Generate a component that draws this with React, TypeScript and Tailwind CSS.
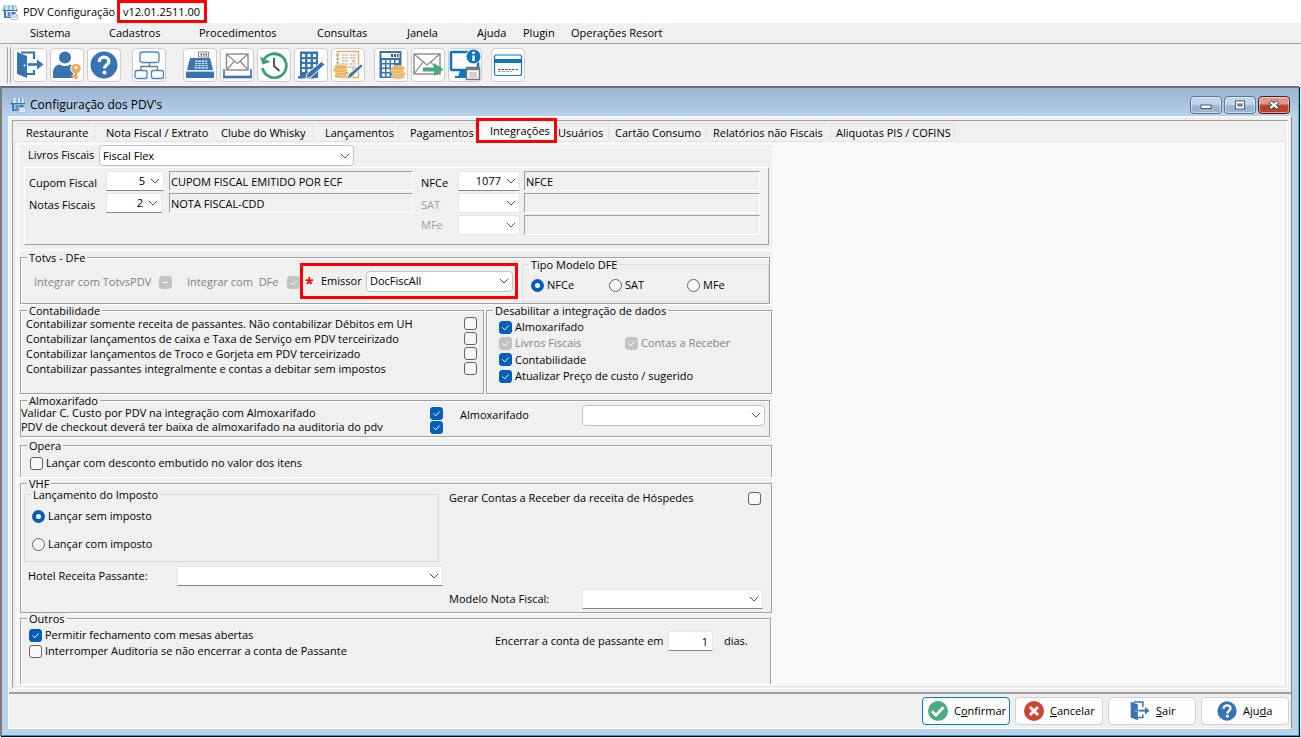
import type { ReactNode } from "react";
import clsx from "clsx";

const MENU = [
  { label: "Sistema", width: "w-[79px]" },
  { label: "Cadastros", width: "w-[90px]" },
  { label: "Procedimentos", width: "w-[118px]" },
  { label: "Consultas", width: "w-[90px]" },
  { label: "Janela", width: "w-[70px]" },
  { label: "Ajuda", width: "w-[46px]" },
  { label: "Plugin", width: "w-[48px]" },
  { label: "Operações Resort", width: "w-[110px]" },
];

const TABS = [
  { label: "Restaurante", className: "w-[80px] pl-[11px]" },
  { label: "Nota Fiscal / Extrato", className: "w-[119px] pl-[11px]" },
  { label: "Clube do Whisky", className: "w-[100px] pl-[7px]" },
  { label: "Lançamentos", className: "w-[85px] pl-[11px]" },
  { label: "Pagamentos", className: "w-[77px] pl-[11px]" },
  { label: "Integrações", className: "w-[81px]", active: true },
  { label: "Usuários", className: "w-[52px] pl-px" },
  { label: "Cartão Consumo", className: "w-[98px] pl-[6px]" },
  { label: "Relatórios não Fiscais", className: "w-[124px] pl-[6px]" },
  { label: "Aliquotas PIS / COFINS", className: "w-[124px] pl-[5px]" },
];

/* ---------- icons ---------- */

function StoreIcon() {
  return (
    <svg width="16" height="16" viewBox="0 0 16 16" aria-hidden="true">
      <path d="M2 1h12l1.500 5H.5z" fill="#8fb4d8" />
      <path d="M4 1h1.500v5H3zM8 1h1.500v5H8zM12 1h1l1 5h-2z" fill="#eaf2fa" />
      <path d="M.5 6h15v1.200H.5z" fill="#3a78b5" />
      <path d="M2 7h2v7H2zM2 12.500h8V14H2z" fill="#3a78b5" />
      <path d="M5.500 8h3v4h-3z" fill="#5b93c8" />
      <path d="M9.500 8h4v2.500h-4z" fill="#3a78b5" />
      <rect x="9" y="10.500" width="6.500" height="5" fill="#e8eef5" stroke="#9db8d2" strokeWidth=".7" />
      <path d="M9 11l3.200 2.500 3.200-2.500" fill="none" stroke="#9db8d2" strokeWidth=".8" />
    </svg>
  );
}

function ExitIcon({ className }: { className: string }) {
  return (
    <svg className={className} viewBox="0 0 28 28" aria-hidden="true">
      <path d="M1 1l10 4v22L1 23z" fill="#3873b3" />
      <path d="M5 1.500h13v6.500M18 19v4h-7" fill="none" stroke="#3873b3" strokeWidth="2.200" />
      <path d="M12 13.500h11" fill="none" stroke="#3873b3" strokeWidth="2.600" />
      <path d="M21 8.500l6.500 5-6.500 5z" fill="#3873b3" />
      <circle cx="8.500" cy="14.500" r="1" fill="#fff" />
    </svg>
  );
}

function HelpIcon({ className }: { className: string }) {
  return (
    <svg className={className} viewBox="0 0 28 28" aria-hidden="true">
      <circle cx="14" cy="14" r="13.500" fill="#3873b3" />
      <path d="M9.200 11c0-3 2-4.900 4.800-4.900s4.900 1.700 4.900 4.200c0 3.400-4.400 3.600-4.400 7.200" fill="none" stroke="#fff" strokeWidth="3.200" />
      <circle cx="14.500" cy="21.400" r="2" fill="#fff" />
    </svg>
  );
}

function UserKeyIcon() {
  return (
    <svg className="size-7" viewBox="0 0 28 28" aria-hidden="true">
      <circle cx="12" cy="6.500" r="6" fill="#3873b3" />
      <path d="M0 27v-5c0-5 3-8 7-8.500 3 2 7 2 10 0l3 1.500v12z" fill="#3873b3" />
      <circle cx="23" cy="17.500" r="5.300" fill="#e6ab55" stroke="#fdfdfd" />
      <path d="M21.500 20h3v8h-3zM18.500 24h4v2.500h-4z" fill="#e6ab55" />
      <circle cx="23" cy="16.500" r="1.500" fill="#fff" />
    </svg>
  );
}

function NetworkIcon() {
  return (
    <svg className="size-8" viewBox="0 0 32 32" fill="none" aria-hidden="true">
      <g stroke="#4f86c0" strokeWidth="1.300">
        <rect x="7" y="3" width="19" height="10.500" rx="2.500" />
        <rect x="2" y="21.500" width="12" height="8" rx="2" />
        <rect x="18.500" y="21.500" width="12" height="8" rx="2" />
      </g>
      <path d="M16.500 14v4M8 21v-3.500h16.500V21" stroke="#777" strokeWidth="1.300" />
    </svg>
  );
}

function RegisterIcon() {
  return (
    <svg className="size-7" viewBox="0 0 28 28" aria-hidden="true">
      <rect x="12.500" y="1" width="10" height="5" fill="#fff" stroke="#888" />
      <path d="M14.500 2.500h1.500v2h-1.500zM17 2.500h1.500v2H17zM19.500 2.500H21v2h-1.500z" fill="#555" />
      <path d="M4 7h20l3 12H1z" fill="#3873b3" />
      <rect y="20.500" width="28" height="6.500" rx=".5" fill="#3873b3" />
      <path d="M1 19.800h26" stroke="#dfe9f3" />
      <path d="M9.500 9.500h11.500l1 8h-13.500z" fill="#dce8f4" />
      <path d="M9 11.500h13M9 13.500h13M8.500 15.500h14M12 9.500l-.5 8M15.200 9.500v8M18.500 9.500l.5 8" stroke="#3873b3" strokeWidth=".9" />
    </svg>
  );
}

function MailTrayIcon() {
  return (
    <svg className="size-8" viewBox="0 0 32 32" fill="none" aria-hidden="true">
      <rect x="5.500" y="5" width="21.500" height="16" stroke="#888" strokeWidth="1.400" />
      <path d="M6 5.500l10.300 9 10.200-9M6 20.500l7-8M26.500 20.500l-7-8" stroke="#888" strokeWidth="1.200" />
      <path d="M3 20v8h27v-8" stroke="#3873b3" strokeWidth="1.600" />
      <path d="M2.200 28h28.600" stroke="#3873b3" strokeWidth="2.600" />
    </svg>
  );
}

function HistoryIcon() {
  return (
    <svg className="size-7" viewBox="0 0 28 28" fill="none" aria-hidden="true">
      <path d="M3.500 9.500A12 12 0 1 1 2.500 17" stroke="#3da075" strokeWidth="2.800" />
      <path d="M0 5.500l2.500 8 8-2.500z" fill="#3da075" />
      <path d="M14 7v8l5.500 5" stroke="#555" strokeWidth="2" />
    </svg>
  );
}

function BuildingEditIcon() {
  return (
    <svg className="size-7" viewBox="0 0 28 28" aria-hidden="true">
      <path d="M3 .5h18V27H3zM1 25h16v2.500H1z" fill="#3873b3" />
      <path d="M5 3h3v3H5zM10.500 3h3v3h-3zM16 3h3v3h-3zM5 8h3v3H5zM10.500 8h3v3h-3zM16 8h3v3h-3zM5 13h3v3H5zM10.500 13h3v3h-3zM16 13h3v3h-3zM5 18h3v3H5zM10.500 18h3v3h-3z" fill="#fff" />
      <path d="M8.500 28l2-6L24.500 10.500l3.500 3L14 26z" fill="#3873b3" stroke="#fff" />
    </svg>
  );
}

function Coins({ x, y }: { x: number; y: number }) {
  return (
    <g transform={`translate(${x} ${y})`} fill="#e8b562" stroke="#f8e3bf" strokeWidth=".6">
      <ellipse cx="8" cy="11.500" rx="7" ry="2.600" />
      <ellipse cx="9" cy="8.800" rx="7" ry="2.600" />
      <ellipse cx="7" cy="6" rx="7" ry="2.600" />
      <ellipse cx="8" cy="3.200" rx="7" ry="2.600" />
    </g>
  );
}

function LedgerIcon() {
  return (
    <svg className="size-8" viewBox="0 0 32 32" fill="none" aria-hidden="true">
      <rect x="5.500" y="2.500" width="21" height="26" fill="#fffaf2" stroke="#e6ab55" strokeWidth="1.300" />
      <path d="M4 6h4M4 10h4M4 14h4M4 18h4" stroke="#aaa" strokeWidth="1.200" />
      <path d="M10 6h6M10 9h6M10 12h6M10 15h6M18 6h6M18 9h6M18 15h6M17 18h7" stroke="#999" strokeDasharray="2 .6" />
      <path d="M20 12h3M20 20h3" stroke="#d66" />
      <Coins x={1} y={15} />
      <path d="M15 30l2-5 12-10 2 2-11.500 11z" fill="#3873b3" stroke="#fff" strokeWidth=".8" />
    </svg>
  );
}

function CalculatorIcon() {
  return (
    <svg className="size-8" viewBox="0 0 32 32" aria-hidden="true">
      <path d="M4.500 2h22v27h-22z" fill="#3873b3" />
      <path d="M6.500 4h18v5h-18z" fill="#fff" />
      <path d="M16 5h2v3h-2zM19 5h2v3h-2zM22 5h1.500v3H22z" fill="#555" />
      <path d="M7 11h3v3H7zM11.500 11h3v3h-3zM16 11h3v3h-3zM20.500 11h3v3h-3zM7 15.500h3v3H7zM11.500 15.500h3v3h-3zM16 15.500h3v3h-3zM7 20h3v3H7zM11.500 20h3v3h-3zM7 24.500h3v3H7zM11.500 24.500h3v3h-3z" fill="#fff" />
      <Coins x={15} y={16} />
    </svg>
  );
}

function MailSendIcon() {
  return (
    <svg className="size-8" viewBox="0 0 32 32" fill="none" aria-hidden="true">
      <rect x="2" y="5" width="26" height="20" stroke="#888" strokeWidth="1.400" />
      <path d="M2 5l13 11L28 5M2 25l9-12M28 25l-9-12" stroke="#888" strokeWidth="1.200" />
      <path d="M11 18.500h11v-4.500l9.500 6.500-9.500 6.500v-4.500H11z" fill="#49a77e" />
    </svg>
  );
}

function MonitorInfoIcon() {
  return (
    <svg className="size-8" viewBox="0 0 32 32" fill="none" aria-hidden="true">
      <rect x="2" y="3" width="27" height="18" rx="1" stroke="#0f75bc" strokeWidth="2.500" />
      <path d="M11 22h7l1 6H9z" fill="#0f75bc" />
      <path d="M6 28h14" stroke="#0f75bc" strokeWidth="2" />
      <circle cx="24.500" cy="7.500" r="7.500" fill="#0f75bc" stroke="#fff" />
      <path d="M24.500 6.500v5.500" stroke="#fff" strokeWidth="2.500" />
      <circle cx="24.500" cy="3.800" r="1.400" fill="#fff" />
      <rect x="17.500" y="18.500" width="13" height="12" fill="#fff" stroke="#777" strokeWidth="1.500" />
      <path d="M17 20h14" stroke="#777" strokeWidth="2.500" />
      <path d="M20 24h8M20 26h8M20 28h8" stroke="#999" strokeWidth=".9" />
    </svg>
  );
}

function CardIcon() {
  return (
    <svg className="size-8" viewBox="0 0 32 32" fill="none" aria-hidden="true">
      <rect x="2.500" y="6" width="27" height="20.500" rx="2" fill="#fff" stroke="#0f75bc" strokeWidth="1.200" />
      <path d="M3 10h26v4H3z" fill="#0f75bc" />
      <path d="M6 20.500h20" stroke="#555" strokeDasharray="2.500 1" />
      <path d="M6 22.500h14" stroke="#888" strokeWidth=".8" strokeDasharray="3 1" />
    </svg>
  );
}

function ConfirmIcon() {
  return (
    <svg className="size-5" viewBox="0 0 20 20" fill="none" aria-hidden="true">
      <circle cx="10" cy="10" r="10" fill="#4fa983" />
      <path d="M4 10.200l4 4 7.500-8" stroke="#fff" strokeWidth="2.800" />
    </svg>
  );
}

function CancelIcon() {
  return (
    <svg className="size-5" viewBox="0 0 20 20" fill="none" aria-hidden="true">
      <circle cx="10" cy="10" r="10" fill="#cb4630" />
      <path d="M6 6l8 8M14 6l-8 8" stroke="#fff" strokeWidth="3" />
    </svg>
  );
}

const TOOLBAR = [
  [
    { label: "Sair do sistema", icon: <ExitIcon className="size-7" /> },
    { label: "Usuários e senhas", icon: <UserKeyIcon /> },
    { label: "Ajuda do sistema", icon: <HelpIcon className="size-7" /> },
  ],
  [{ label: "Estrutura", icon: <NetworkIcon /> }],
  [
    { label: "Caixa", icon: <RegisterIcon /> },
    { label: "Mensagens", icon: <MailTrayIcon /> },
    { label: "Histórico", icon: <HistoryIcon /> },
    { label: "Empresa", icon: <BuildingEditIcon /> },
    { label: "Lançamentos contábeis", icon: <LedgerIcon /> },
  ],
  [
    { label: "Cálculo", icon: <CalculatorIcon /> },
    { label: "Enviar", icon: <MailSendIcon /> },
    { label: "Informações", icon: <MonitorInfoIcon /> },
  ],
  [{ label: "Cartões", icon: <CardIcon /> }],
];

const TOOLBAR_GROUP_MARGIN = ["", "ml-[11px]", "ml-[17px]", "ml-[9px]", "ml-[9px]"];

/* ---------- form controls ---------- */

type GroupProps = { title: string; children: ReactNode; className?: string; light?: boolean };

function Group({ title, children, className, light }: GroupProps) {
  return (
    <fieldset
      className={clsx(
        "relative min-w-0 border",
        light ? "border-[#dcdcdc]" : "border-[#a0a0a0] shadow-[inset_1px_1px_0_#fff,1px_1px_0_#fff]",
        className,
      )}
    >
      <legend className="absolute -top-1.5 left-1.5 bg-[#f0f0f0] px-0.5 leading-3">{title}</legend>
      {children}
    </fieldset>
  );
}

type CheckProps = {
  label: string;
  checked?: boolean;
  mixed?: boolean;
  disabled?: boolean;
  boxLast?: boolean;
  className?: string;
};

function Check({ label, checked, mixed, disabled, boxLast, className }: CheckProps) {
  return (
    <label
      className={clsx(
        "flex items-center whitespace-pre",
        boxLast && "flex-row-reverse justify-between",
        disabled && "text-[#838383]",
        className,
      )}
    >
      <span className="relative grid size-[13px] shrink-0">
        <input
          type="checkbox"
          defaultChecked={checked}
          disabled={disabled}
          className="peer size-[13px] appearance-none rounded-[3px] border border-[#626262] bg-[#f8f8f8] checked:border-[#005fb8] checked:bg-[#005fb8] disabled:border-[#c3c3c3] disabled:bg-[#c3c3c3]"
        />
        <svg
          viewBox="0 0 13 13"
          className={clsx("pointer-events-none absolute inset-0", !mixed && "opacity-0 peer-checked:opacity-100")}
          fill="none"
          stroke="#fff"
          aria-hidden="true"
        >
          <path d={mixed ? "M4 6.500h5" : "M3.500 6.500l2.200 2.300 4-4.300"} />
        </svg>
      </span>
      <span className={boxLast ? "" : "pl-[3px]"}>{label}</span>
    </label>
  );
}

function Radio({ label, name, checked, className }: { label: string; name: string; checked?: boolean; className?: string }) {
  return (
    <label className={clsx("flex items-center gap-[3px]", className)}>
      <input
        type="radio"
        name={name}
        defaultChecked={checked}
        className="size-[13px] shrink-0 appearance-none rounded-full border border-[#626262] bg-[#f8f8f8] checked:border-4 checked:border-[#005fb8] checked:bg-white"
      />
      {label}
    </label>
  );
}

type ComboProps = {
  id: string;
  value?: string;
  flat?: boolean;
  numeric?: boolean;
  disabled?: boolean;
  className: string;
};

function Combo({ id, value = "", flat, numeric, disabled, className }: ComboProps) {
  return (
    <span className={clsx("relative flex shrink-0", className)}>
      <select
        id={id}
        defaultValue={value}
        disabled={disabled}
        className={clsx(
          "w-full appearance-none bg-white text-black opacity-100",
          flat ? "border border-[#e6e6e6]" : "rounded border border-[#b9c4cf] pl-[3px]",
          flat && !disabled && "border-b-[#868686]",
          numeric && "pr-[18px] text-right [text-align-last:right]",
        )}
      >
        <option>{value}</option>
      </select>
      <svg
        viewBox="0 0 10 6"
        className="pointer-events-none absolute top-1/2 right-1 h-1.5 w-2.5 -translate-y-1/2"
        fill="none"
        stroke="#555"
        aria-hidden="true"
      >
        <path d="M.8.8L5 5 9.200.8" />
      </svg>
    </span>
  );
}

function ReadOnly({ value = "", label }: { value?: string; label: string }) {
  return (
    <input
      readOnly
      aria-label={label}
      value={value}
      className="h-5 w-full border border-t-[#a0a0a0] border-r-white border-b-white border-l-[#a0a0a0] bg-[#f0f0f0] pl-px outline-none"
    />
  );
}

/* ---------- form sections ---------- */

function FiscalSection() {
  return (
    <section className="border-b-2 border-[#f9f9f9] pr-0.5 pb-1 pl-1">
      <div className="flex h-[22px] items-start pl-1">
        <label htmlFor="livros" className="w-[71px] pt-[3px]">Livros Fiscais</label>
        <Combo id="livros" value="Fiscal Flex" className="h-[21px] w-[255px]" />
      </div>
      <div className="flex min-h-[78px] w-[745px] gap-2 border border-t-white border-r-[#a0a0a0] border-b-[#a0a0a0] border-l-white pt-[3px] pl-1">
        <div className="grid grid-cols-[77px_63px_244px] content-start items-center gap-y-0.5">
          <label htmlFor="cupom" className="pt-1">Cupom Fiscal</label>
          <Combo id="cupom" value="5" flat numeric className="h-5 w-[58px]" />
          <ReadOnly label="Descrição do cupom fiscal" value="CUPOM FISCAL EMITIDO POR ECF" />
          <label htmlFor="notas" className="pt-1">Notas Fiscais</label>
          <Combo id="notas" value="2" flat numeric className="h-5 w-[56px]" />
          <ReadOnly label="Descrição da nota fiscal" value="NOTA FISCAL-CDD" />
        </div>
        <div className="grid grid-cols-[37px_66px_236px] content-start items-center gap-y-0.5">
          <label htmlFor="nfce" className="pt-1">NFCe</label>
          <Combo id="nfce" value="1077" flat numeric className="h-5 w-[62px]" />
          <ReadOnly label="Descrição NFCe" value="NFCE" />
          <label htmlFor="sat" className="pt-1 text-[#a0a0a0]">SAT</label>
          <Combo id="sat" flat disabled className="h-5 w-[62px]" />
          <ReadOnly label="Descrição SAT" />
          <label htmlFor="mfe" className="text-[#a0a0a0]">MFe</label>
          <Combo id="mfe" flat disabled className="h-5 w-[62px]" />
          <ReadOnly label="Descrição MFe" />
        </div>
      </div>
    </section>
  );
}

function TotvsSection() {
  return (
    <Group title="Totvs - DFe" className="mt-1.5 mr-0.5 flex min-h-[47px] items-start pt-[5px]">
      <Check label="Integrar com TotvsPDV" mixed disabled boxLast className="mt-3 ml-[13px] w-[138px]" />
      <Check label="Integrar com  DFe" checked disabled boxLast className="mt-3 ml-[15px] w-[113px]" />
      <div className="flex h-9 w-[218px] items-center border-3 border-[#f00] pl-0.5">
        <span className="h-3 w-4 text-base leading-4 font-bold text-[#f00]">*</span>
        <label htmlFor="emissor" className="w-[45px]">Emissor</label>
        <Combo id="emissor" value="DocFiscAll" className="h-[21px] w-[147px]" />
      </div>
      <Group title="Tipo Modelo DFE" light className="mt-px ml-1 flex h-[38px] w-[247px] items-center pt-1 pl-2">
        <Radio name="modelo" label="NFCe" checked className="w-[78px]" />
        <Radio name="modelo" label="SAT" className="w-[78px]" />
        <Radio name="modelo" label="MFe" />
      </Group>
    </Group>
  );
}

function ContabilidadeSection() {
  return (
    <div className="mt-1.5 flex gap-0.5">
      <Group title="Contabilidade" className="min-h-[84px] w-[464px] pt-[5px] pr-1.5 pl-[5px]">
        <Check boxLast className="h-[15px]" label="Contabilizar somente receita de passantes. Não contabilizar Débitos em UH" />
        <Check boxLast className="h-[15px]" label="Contabilizar lançamentos de caixa e Taxa de Serviço em PDV terceirizado" />
        <Check boxLast className="h-[15px]" label="Contabilizar lançamentos de Troco e Gorjeta em PDV terceirizado" />
        <Check boxLast className="h-[15px]" label="Contabilizar passantes integralmente e contas a debitar sem impostos" />
      </Group>
      <Group title="Desabilitar a integração de dados" className="min-h-[84px] flex-1 pt-2 pl-3">
        <Check className="h-4" label="Almoxarifado" checked />
        <div className="flex h-4">
          <Check className="w-[126px]" label="Livros Fiscais" checked disabled />
          <Check label="Contas a Receber" checked disabled />
        </div>
        <Check className="h-[17px]" label="Contabilidade" checked />
        <Check className="h-4" label="Atualizar Preço de custo / sugerido" checked />
      </Group>
    </div>
  );
}

function AlmoxarifadoSection() {
  return (
    <Group title="Almoxarifado" className="mt-1.5 mr-0.5 flex min-h-[37px]">
      <div className="w-[422px] pt-[5px]">
        <Check boxLast checked className="h-3.5" label="Validar C. Custo por PDV na integração com Almoxarifado" />
        <Check boxLast checked className="h-3.5" label="PDV de checkout deverá ter baixa de almoxarifado na auditoria do pdv" />
      </div>
      <div className="flex h-7 items-center pl-[17px]">
        <label htmlFor="almox" className="w-[122px]">Almoxarifado</label>
        <Combo id="almox" className="h-[21px] w-[183px]" />
      </div>
    </Group>
  );
}

function VhfSection() {
  return (
    <Group title="VHF" className="mt-1.5 flex min-h-[130px] items-start justify-between pr-2 pl-[3px]">
      <div className="pt-2.5">
        <Group title="Lançamento do Imposto" light className="flex h-[68px] w-[415px] flex-col gap-2 pt-[11px] pl-[7px]">
          <Radio name="imposto" label="Lançar sem imposto" checked className="h-5" />
          <Radio name="imposto" label="Lançar com imposto" className="h-5" />
        </Group>
        <div className="flex items-center pt-1 pl-1">
          <label htmlFor="hotel" className="w-[149px]">Hotel Receita Passante:</label>
          <Combo id="hotel" flat className="h-5 w-[266px]" />
        </div>
      </div>
      <div className="flex w-[314px] flex-col gap-[83px] pt-1.5">
        <Check boxLast label="Gerar Contas a Receber da receita de Hóspedes" className="mr-0.5 h-4" />
        <div className="flex items-center">
          <label htmlFor="modelo-nf" className="w-[133px]">Modelo Nota Fiscal:</label>
          <Combo id="modelo-nf" flat className="h-5 w-[181px]" />
        </div>
      </div>
    </Group>
  );
}

function OutrosSection() {
  return (
    <Group title="Outros" className="mt-[5px] mr-px flex min-h-[66px] items-start border-b-0 pl-2">
      <div className="w-[466px] pt-2">
        <Check className="h-4" label="Permitir fechamento com mesas abertas" checked />
        <Check className="h-4" label="Interromper Auditoria se não encerrar a conta de Passante" />
      </div>
      <div className="flex items-center pt-3">
        <label htmlFor="dias" className="w-[173px]">Encerrar a conta de passante em</label>
        <input
          id="dias"
          defaultValue="1"
          className="mr-[11px] h-5 w-[45px] border border-[#e6e6e6] border-b-[#868686] bg-white pr-1 text-right"
        />
        dias.
      </div>
    </Group>
  );
}

/* ---------- window chrome ---------- */

function TitleButtons() {
  const base =
    "grid h-[18px] w-8 place-items-center rounded-sm border shadow-[inset_0_0_0_1px_rgba(255,255,255,0.5)]";
  const blue = "border-[#5c7696] bg-linear-to-b from-[#c3d5e9] from-45% to-[#9ab5d2] to-55%";
  return (
    <div className="flex gap-0.5">
      <button aria-label="Minimizar" className={clsx(base, blue)}>
        <svg width="12" height="10" viewBox="0 0 12 10">
          <rect x="1" y="5" width="10" height="3.500" fill="#fff" stroke="#50586a" />
        </svg>
      </button>
      <button aria-label="Maximizar" className={clsx(base, blue)}>
        <svg width="12" height="10" viewBox="0 0 12 10">
          <rect x="1.500" y="1" width="9" height="8" fill="#fff" stroke="#50586a" />
          <rect x="4" y="4" width="4" height="2" fill="#9ab5d2" stroke="#50586a" />
        </svg>
      </button>
      <button
        aria-label="Fechar"
        className={clsx(base, "border-[#5a1620] bg-linear-to-b from-[#dd9a8c] from-40% to-[#b8412c] to-55%")}
      >
        <svg width="12" height="10" viewBox="0 0 12 10" fill="none">
          <path d="M2 1.500l8 7M10 1.500l-8 7" stroke="#50586a" strokeWidth="4" />
          <path d="M2.500 2l7 6M9.500 2l-7 6" stroke="#fff" strokeWidth="2.200" />
        </svg>
      </button>
    </div>
  );
}

function FooterButton({ icon, children, primary, className }: { icon: ReactNode; children: ReactNode; primary?: boolean; className: string }) {
  return (
    <button
      className={clsx(
        "flex h-7 w-[88px] items-center gap-1.5 rounded border bg-[#fdfdfd]",
        primary ? "border-[#0078d4]" : "border-[#d0d0d0]",
        className,
      )}
    >
      {icon}
      <span>{children}</span>
    </button>
  );
}

export default function App() {
  return (
    <div className="flex min-h-screen flex-col overflow-x-hidden bg-[#f0f0f0] font-['Open_Sans','Noto_Sans',sans-serif] text-[11px] leading-[14px] text-black">
      <header className="flex h-[23px] items-center bg-white pl-0.5">
        <StoreIcon />
        <h1 className="w-[99px] pl-[5px] whitespace-nowrap">PDV Configuração</h1>
        <span className="flex h-[23px] w-[90px] items-center border-3 border-[#f00] pl-[3px]">v12.01.2511.00</span>
      </header>

      <nav className="flex h-5 items-center pl-[30px]">
        {MENU.map((item) => (
          <button key={item.label} className={clsx("shrink-0 text-left whitespace-nowrap", item.width)}>
            {item.label}
          </button>
        ))}
      </nav>

      <div className="flex h-[43px] items-center border-t border-[#a0a0a0] pl-[7px]">
        <span className="mr-0.5 h-9 w-1 border-x border-[#a0a0a0]" />
        {TOOLBAR.map((group, i) => (
          <div key={i} className={clsx("flex gap-[3px]", TOOLBAR_GROUP_MARGIN[i])}>
            {group.map((tool) => (
              <button
                key={tool.label}
                aria-label={tool.label}
                className="grid size-[34px] place-items-center rounded border border-[#cfcfcf] bg-[#fdfdfd]"
              >
                {tool.icon}
              </button>
            ))}
          </div>
        ))}
      </div>

      <main className="mr-0.5 mb-0.5 flex flex-1 flex-col border-t-2 border-r border-b border-l-2 border-t-[#6b6f73] border-r-[#2bc4e0] border-b-[#2b9bc0] border-l-[#7d7d7d] bg-[#b9d1ea] px-1.5 pb-1.5 shadow-[1px_1px_0_#000]">
        <div className="-mx-1.5 flex h-[28px] items-center justify-between bg-linear-to-b from-[#99b4d1] to-[#b9d1ea] px-2 pt-1.5 text-xs">
          <h2 className="flex items-center gap-1">
            <StoreIcon />
            Configuração dos PDV's
          </h2>
          <TitleButtons />
        </div>

        <div className="flex flex-1 flex-col border border-white border-r-[#8a8a8a] bg-[#f0f0f0]">
          <div className="mx-[3px] mt-[3px] mb-[3px] flex flex-1 flex-col border border-t-[#a0a0a0] border-r-white border-b-white border-l-[#a0a0a0]">
            <div role="tablist" className="flex h-5 items-end pl-0.5">
              {TABS.map((tab) => (
                <button
                  key={tab.label}
                  role="tab"
                  aria-selected={!!tab.active}
                  className={clsx(
                    "shrink-0 text-left whitespace-nowrap",
                    tab.active
                      ? "z-10 h-[25px] translate-y-0.5 border-3 border-[#f00] bg-[#f9f9f9] pl-[11px]"
                      : "h-[18px] border-t border-r border-[#e2e2e2]",
                    tab.className,
                  )}
                >
                  {tab.label}
                </button>
              ))}
            </div>
            <div className="mx-px mb-px flex-1 border border-[#e2e2e2] bg-[#f9f9f9] pt-[3px] pb-px pl-[5px]">
              <form className="w-[752px] bg-[#f0f0f0]">
                <FiscalSection />
                <TotvsSection />
                <ContabilidadeSection />
                <AlmoxarifadoSection />
                <Group title="Opera" className="mt-2 min-h-8 border-b-0 pt-[9px] pl-[9px]">
                  <Check label="Lançar com desconto embutido no valor dos itens" className="h-4" />
                </Group>
                <VhfSection />
                <OutrosSection />
              </form>
            </div>
          </div>

          <footer className="flex h-9 items-start justify-end gap-[5px] border-t-2 border-[#a0a0a0] pt-[3px] pr-0.5">
            <FooterButton primary icon={<ConfirmIcon />} className="pl-[5px]">
              C<u>o</u>nfirmar
            </FooterButton>
            <FooterButton icon={<CancelIcon />} className="pl-2">
              <u>C</u>ancelar
            </FooterButton>
            <FooterButton icon={<ExitIcon className="size-5" />} className="pl-[21px]">
              <u>S</u>air
            </FooterButton>
            <FooterButton icon={<HelpIcon className="size-5" />} className="pl-[15px]">
              Aju<u>d</u>a
            </FooterButton>
          </footer>
        </div>
      </main>
    </div>
  );
}
